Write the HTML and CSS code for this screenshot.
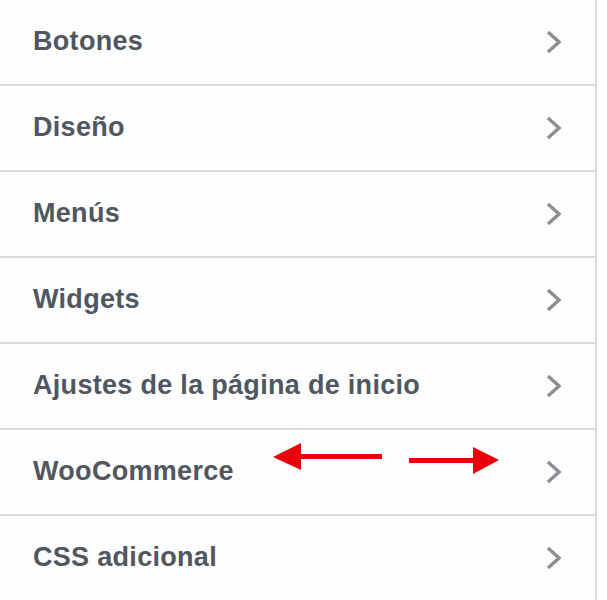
FILE: index.html
```html
<!DOCTYPE html>
<html lang="es">
<head>
    <meta charset="UTF-8">
    <title>Personalizar</title>
    <link rel="stylesheet" href="styles.css">
</head>
<body>
<ul class="panel-list">
    <li class="panel-item"><span class="panel-title">Botones</span><svg class="chevron" viewBox="0 0 18 26"><polyline points="3,3 14,13 3,23"/></svg></li>
    <li class="panel-item"><span class="panel-title">Diseño</span><svg class="chevron" viewBox="0 0 18 26"><polyline points="3,3 14,13 3,23"/></svg></li>
    <li class="panel-item"><span class="panel-title">Menús</span><svg class="chevron" viewBox="0 0 18 26"><polyline points="3,3 14,13 3,23"/></svg></li>
    <li class="panel-item"><span class="panel-title">Widgets</span><svg class="chevron" viewBox="0 0 18 26"><polyline points="3,3 14,13 3,23"/></svg></li>
    <li class="panel-item"><span class="panel-title">Ajustes de la página de inicio</span><svg class="chevron" viewBox="0 0 18 26"><polyline points="3,3 14,13 3,23"/></svg></li>
    <li class="panel-item marked">
        <span class="panel-title">WooCommerce</span>
        <svg class="chevron" viewBox="0 0 18 26"><polyline points="3,3 14,13 3,23"/></svg>
        <!-- annotation arrows -->
        <svg class="arrows" viewBox="0 0 230 34">
            <polygon points="0,15 28,1 28,28"/>
            <rect x="27" y="12" width="82" height="5"/>
            <rect x="136" y="16" width="65" height="5"/>
            <polygon points="200,5 226,18 200,32"/>
        </svg>
    </li>
    <li class="panel-item"><span class="panel-title">CSS adicional</span><svg class="chevron" viewBox="0 0 18 26"><polyline points="3,3 14,13 3,23"/></svg></li>
</ul>
</body>
</html>
```

FILE: styles.css
```css
body {
    margin: 0;
    background: #fff;
    font-family: "Liberation Sans", Arial, sans-serif;
}

.panel-list {
    list-style: none;
    margin: 0;
    padding: 0;
    width: 595px;
    border-right: 2px solid #dcdcde;
    background: #fdfdfd;
}

.panel-item {
    position: relative;
    display: flex;
    align-items: center;
    justify-content: space-between;
    height: 84px;
    padding: 0 32px 0 33px;
    border-bottom: 2px solid #dcdcde;
}

.panel-title {
    font-size: 27px;
    font-weight: 700;
    letter-spacing: 0.3px;
    color: #50575e;
    margin-top: -1px;
}

.chevron {
    width: 18px;
    height: 26px;
    fill: none;
    stroke: #8c8f94;
    stroke-width: 3.5;
}

.arrows {
    position: absolute;
    left: 273px;
    top: 12px;
    width: 230px;
    height: 34px;
    fill: #e8000b;
}
```
